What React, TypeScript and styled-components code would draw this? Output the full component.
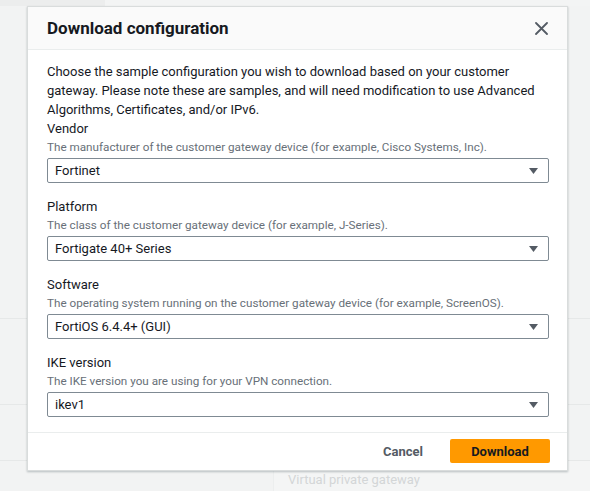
import React from "react";
import styled, { createGlobalStyle } from "styled-components";

const GlobalStyle = createGlobalStyle`
  html, body { margin: 0; padding: 0; }
  body {
    background: #f2f3f3;
    font-family: Roboto, "Noto Sans", "Liberation Sans", sans-serif;
    color: #16191f;
  }
  * { box-sizing: border-box; }
`;

const Page = styled.div`
  position: relative;
  width: 590px;
  height: 491px;
  overflow: hidden;
  display: flex;
  flex-direction: column;
  background: #f2f3f3;
`;

const TopStrip = styled.div`
  height: 6px;
  display: grid;
  grid-template-columns: 105px 1fr;
`;

const StripCell = styled.div<{ $tone: string }>`
  background: ${(p) => p.$tone};
`;

const Band = styled.div<{ $h: number }>`
  height: ${(p) => p.$h}px;
  border-bottom: 1px solid #e6e8e8;
`;

const TableRow = styled.div`
  flex: 1;
  display: grid;
  grid-template-columns: 273px 1fr;
`;

const TableCell = styled.div<{ $divider?: boolean }>`
  border-left: ${(p) => (p.$divider ? "1px solid #eceeee" : "none")};
  background: ${(p) => (p.$divider ? "#f4f5f5" : "transparent")};
  padding: 9px 0 0 14px;
  font-size: 13px;
  line-height: 20px;
  color: #d3d6d7;
`;

const Modal = styled.section`
  position: absolute;
  left: 27px;
  top: 6px;
  width: 541px;
  background: #ffffff;
  border: 1px solid #d9dcdc;
  box-shadow: 0 1px 2px rgba(0, 28, 36, 0.25);
  display: flex;
  flex-direction: column;
`;

const Header = styled.header`
  height: 43px;
  padding: 0 19px 0 19px;
  display: flex;
  align-items: center;
  justify-content: space-between;
  background: #fafafa;
  border-bottom: 1px solid #eaeded;
`;

const Title = styled.h2`
  margin: 0;
  font-size: 17px;
  font-weight: 700;
  line-height: 22px;
  color: #16191f;
`;

const CloseButton = styled.button`
  width: 14px;
  height: 14px;
  padding: 0;
  border: none;
  background: transparent;
  display: flex;
  align-items: center;
  justify-content: center;
  cursor: pointer;
`;

const Body = styled.div`
  padding: 12px 18px 15px 19px;
  display: flex;
  flex-direction: column;
`;

const Description = styled.p`
  margin: 0;
  font-size: 13px;
  line-height: 19px;
  color: #16191f;
`;

const Fields = styled.div`
  display: flex;
  flex-direction: column;
  gap: 14px;
`;

const Field = styled.div`
  display: flex;
  flex-direction: column;
`;

const Label = styled.label`
  font-size: 13px;
  line-height: 20px;
  color: #16191f;
`;

const Hint = styled.span`
  font-size: 11.7px;
  line-height: 16px;
  color: #687078;
  margin-bottom: 3px;
`;

const SelectBox = styled.div`
  height: 25px;
  border: 1px solid #7f8a93;
  border-radius: 2px;
  padding: 0 10px 0 7px;
  display: flex;
  align-items: center;
  justify-content: space-between;
  font-size: 13px;
  color: #16191f;
  background: #fff;
`;

const Footer = styled.footer`
  border-top: 1px solid #eaeded;
  padding: 6px 17px 7px 19px;
  display: flex;
  justify-content: flex-end;
  align-items: center;
  gap: 7px;
`;

const Button = styled.button<{ $primary?: boolean }>`
  height: 24px;
  width: ${(p) => (p.$primary ? "100px" : "auto")};
  padding: ${(p) => (p.$primary ? "0" : "0 20px")};
  border: none;
  border-radius: 2px;
  background: ${(p) => (p.$primary ? "#ff9900" : "transparent")};
  color: ${(p) => (p.$primary ? "#16191f" : "#545b64")};
  font-family: inherit;
  font-size: 13px;
  font-weight: 700;
  cursor: pointer;
`;

const Caret = () => (
  <svg width="9" height="6" viewBox="0 0 9 6" aria-hidden="true">
    <path d="M0 0 H9 L4.5 6 Z" fill="#545b64" />
  </svg>
);

const fields = [
  {
    label: "Vendor",
    hint: "The manufacturer of the customer gateway device (for example, Cisco Systems, Inc).",
    value: "Fortinet",
  },
  {
    label: "Platform",
    hint: "The class of the customer gateway device (for example, J-Series).",
    value: "Fortigate 40+ Series",
  },
  {
    label: "Software",
    hint: "The operating system running on the customer gateway device (for example, ScreenOS).",
    value: "FortiOS 6.4.4+ (GUI)",
  },
  {
    label: "IKE version",
    hint: "The IKE version you are using for your VPN connection.",
    value: "ikev1",
  },
];

export default function App() {
  return (
    <>
      <GlobalStyle />
      <Page>
        <TopStrip>
          <StripCell $tone="#eceded" />
          <StripCell $tone="#f3f4f4" />
        </TopStrip>
        <Band $h={313} />
        <Band $h={86} />
        <Band $h={56} />
        <TableRow>
          <TableCell />
          <TableCell $divider>Virtual private gateway</TableCell>
        </TableRow>

        <Modal role="dialog" aria-label="Download configuration">
          <Header>
            <Title>Download configuration</Title>
            <CloseButton aria-label="Close">
              <svg width="13" height="13" viewBox="0 0 13 13" aria-hidden="true">
                <path d="M1 1 L12 12 M12 1 L1 12" stroke="#545b64" strokeWidth="1.8" strokeLinecap="round" />
              </svg>
            </CloseButton>
          </Header>
          <Body>
            <Description>
              Choose the sample configuration you wish to download based on your customer gateway. Please note these
              are samples, and will need modification to use Advanced Algorithms, Certificates, and/or IPv6.
            </Description>
            <Fields>
              {fields.map((f) => (
                <Field key={f.label}>
                  <Label>{f.label}</Label>
                  <Hint>{f.hint}</Hint>
                  <SelectBox>
                    <span>{f.value}</span>
                    <Caret />
                  </SelectBox>
                </Field>
              ))}
            </Fields>
          </Body>
          <Footer>
            <Button>Cancel</Button>
            <Button $primary>Download</Button>
          </Footer>
        </Modal>
      </Page>
    </>
  );
}
